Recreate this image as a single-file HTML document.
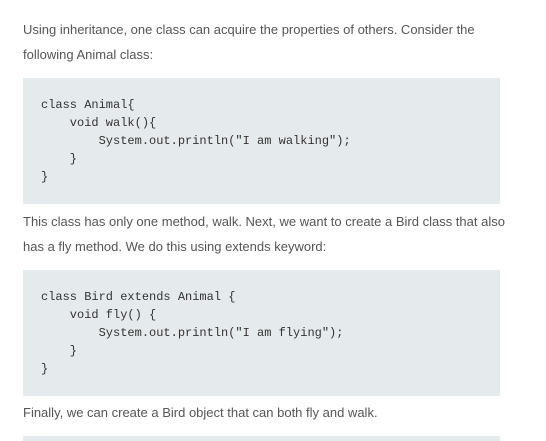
<html style="overflow:hidden;height:441px"><head><style>
body{margin:0;background:#fff;width:546px;height:441px;overflow:hidden;font-family:"Liberation Sans",sans-serif;color:#555;position:relative;}
p{position:absolute;left:23px;margin:0;font-size:13px;line-height:25px;width:510px;}
pre{position:absolute;left:23px;width:441px;margin:0;background:#e5ebed;padding:18px 18px;font-family:"Liberation Mono",monospace;font-size:12px;line-height:18px;color:#333;}
</style></head><body>
<p style="top:17px">Using inheritance, one class can acquire the properties of others. Consider the<br>following Animal class:</p>
<pre style="top:78px;height:90px">class Animal{
    void walk(){
        System.out.println("I am walking");
    }
}</pre>
<p style="top:209px">This class has only one method, walk. Next, we want to create a Bird class that also<br>has a fly method. We do this using extends keyword:</p>
<pre style="top:270px;height:90px">class Bird extends Animal {
    void fly() {
        System.out.println("I am flying");
    }
}</pre>
<p style="top:400px">Finally, we can create a Bird object that can both fly and walk.</p>
<pre style="top:436px;height:0px;padding:3px 18px"></pre>
</body></html>
